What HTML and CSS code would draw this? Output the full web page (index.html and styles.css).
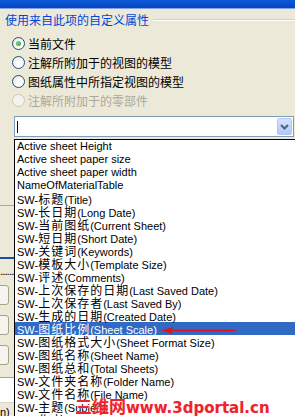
FILE: index.html
```html
<!DOCTYPE html>
<html lang="zh">
<head>
  <meta charset="UTF-8">
  <meta name="viewport" content="width=device-width, initial-scale=1.0">
  <title>自定义属性</title>
  <link rel="stylesheet" href="styles.css">
</head>
<body>
  <!-- window title bar (only its bottom edge is visible) -->
  <div class="titlebar"></div>

  <div class="dialog">
    <!-- group box header -->
    <div class="group-head">
      <span class="group-title">使用来自此项的自定义属性</span>
      <span class="groove"></span>
    </div>

    <div class="options">
      <label class="option"><span class="radio checked"></span>当前文件</label>
      <label class="option"><span class="radio"></span>注解所附加于的视图的模型</label>
      <label class="option"><span class="radio"></span>图纸属性中所指定视图的模型</label>
      <label class="option disabled"><span class="radio"></span>注解所附加于的零部件</label>
    </div>

    <div class="combo">
      <span class="caret"></span>
      <span class="drop-btn">
        <svg width="9" height="6" viewBox="0 0 9 6"><path d="M1 1 L4.5 4.5 L8 1" fill="none" stroke="#4d6185" stroke-width="2"/></svg>
      </span>
    </div>

    <!-- parts of the dialog that sit under the open list -->
    <div class="behind">
      <div class="sep"></div>
      <div class="blue-line"></div>
      <div class="dots">........</div>
      <div class="btn-edge"></div>
      <div class="btn-edge"></div>
      <div class="btn-edge"></div>
      <div class="white-box"></div>
      <div class="tail">n)</div>
    </div>

    <!-- open drop-down list -->
    <ul class="droplist">
      <li>Active sheet Height</li>
      <li>Active sheet paper size</li>
      <li>Active sheet paper width</li>
      <li>NameOfMaterialTable</li>
      <li>SW-<span class="zh">标题</span>(Title)</li>
      <li>SW-<span class="zh">长日期</span>(Long Date)</li>
      <li>SW-<span class="zh">当前图纸</span>(Current Sheet)</li>
      <li>SW-<span class="zh">短日期</span>(Short Date)</li>
      <li>SW-<span class="zh">关键词</span>(Keywords)</li>
      <li>SW-<span class="zh">模板大小</span>(Template Size)</li>
      <li>SW-<span class="zh">评述</span>(Comments)</li>
      <li>SW-<span class="zh">上次保存的日期</span>(Last Saved Date)</li>
      <li>SW-<span class="zh">上次保存者</span>(Last Saved By)</li>
      <li>SW-<span class="zh">生成的日期</span>(Created Date)</li>
      <li class="selected">SW-<span class="zh">图纸比例</span>(Sheet Scale)</li>
      <li>SW-<span class="zh">图纸格式大小</span>(Sheet Format Size)</li>
      <li>SW-<span class="zh">图纸名称</span>(Sheet Name)</li>
      <li>SW-<span class="zh">图纸总和</span>(Total Sheets)</li>
      <li>SW-<span class="zh">文件夹名称</span>(Folder Name)</li>
      <li>SW-<span class="zh">文件名称</span>(File Name)</li>
      <li>SW-<span class="zh">主题</span>(Subject)</li>
      <li>SW-<span class="zh">作者</span>(Author)</li>
    </ul>

    <!-- red pointer drawn over the screenshot -->
    <svg class="pointer" width="80" height="10" viewBox="0 0 80 10">
      <line x1="10" y1="5.5" x2="76" y2="5.5" stroke="#e2101c" stroke-width="1.3"/>
      <path d="M1 5.5 L13 2 L11 5.5 L13 9 Z" fill="#e2101c"/>
    </svg>

    <div class="watermark"><span class="wm-zh">三维网</span>www.3dportal.cn</div>
  </div>
</body>
</html>
```

FILE: styles.css
```css
body {
  margin: 0;
  width: 295px;
  height: 416px;
  overflow: hidden;
  background-color: #ece9d8;
  font-family: "Liberation Sans", "Noto Sans CJK SC", sans-serif;
  font-size: 12px;
  color: #000;
}

.titlebar {
  height: 8px;
  background: linear-gradient(#0a5ad8, #0844c0);
  border-bottom: 1px solid #7fa4e4;
}

.dialog {
  position: relative;
  height: 407px;
}

.group-head {
  display: flex;
  align-items: center;
  height: 16px;
  margin-top: 3px;
  padding-left: 5px;
}

.group-title {
  color: #0046d5;
  font-family: "Noto Sans CJK SC", sans-serif;
  font-size: 12px;
  line-height: 16px;
}

.groove {
  flex: 1;
  margin-left: 4px;
  border-top: 1px solid #d0d0bf;
  border-bottom: 1px solid #fff;
}

.options {
  padding-top: 6px;
}

.option {
  display: flex;
  align-items: center;
  height: 19px;
  padding-left: 12px;
  font-family: "Noto Sans CJK SC", sans-serif;
  font-size: 12px;
}

.radio {
  width: 11px;
  height: 11px;
  margin-right: 3px;
  border: 1px solid #1c5180;
  border-radius: 50%;
  background: radial-gradient(circle at 65% 65%, #fff 30%, #dcdcd7 100%);
  display: flex;
  align-items: center;
  justify-content: center;
}

.radio.checked::after {
  content: "";
  width: 5px;
  height: 5px;
  border-radius: 50%;
  background: radial-gradient(circle at 35% 35%, #7ad67a, #21a121);
}

.option.disabled {
  color: #aca899;
}

.option.disabled .radio {
  border-color: #cac8bb;
  background: #f4f3ee;
}

.combo {
  display: flex;
  align-items: center;
  justify-content: space-between;
  height: 19px;
  margin: 6px 1px 0 14px;
  padding: 0 1px 0 2px;
  background: #fff;
  border: 1px solid #7f9db9;
}

.caret {
  width: 1px;
  height: 12px;
  background: #000;
}

.drop-btn {
  width: 15px;
  height: 17px;
  box-sizing: border-box;
  display: flex;
  align-items: center;
  justify-content: center;
  background: linear-gradient(#d6e3fe, #b4c8f5);
  border: 1px solid #b2c4ef;
  border-radius: 2px;
}

.behind {
  display: flex;
  flex-direction: column;
  padding-top: 68px;
}

.sep {
  height: 1px;
  background: #aca899;
}

.blue-line {
  height: 2px;
  margin-top: 51px;
  background: #1f4c9c;
}

.dots {
  height: 10px;
  margin-top: 8px;
  line-height: 10px;
  font-size: 10px;
  letter-spacing: -1px;
}

.btn-edge {
  width: 40px;
  height: 20px;
  margin: 8px 0 2px -31px;
  box-sizing: border-box;
  border: 1px solid #a5a38f;
  border-radius: 3px;
  background: #f5f4ee;
}

.white-box {
  height: 24px;
  margin-top: 10px;
  background: #fff;
  border-top: 1px solid #a5a38f;
  border-bottom: 1px solid #d8d6c8;
}

.tail {
  margin-top: 3px;
  font-size: 11px;
  line-height: 12px;
}

.droplist {
  position: absolute;
  top: 127px;
  left: 14px;
  width: 290px;
  margin: 0;
  padding: 0;
  list-style: none;
  background: #fff;
  border: 1px solid #000;
  font-size: 11px;
}

.droplist li {
  height: 13px;
  line-height: 13px;
  padding-left: 2px;
  white-space: nowrap;
}

.droplist .zh {
  font-family: "Noto Sans CJK SC", sans-serif;
  font-size: 12px;
  letter-spacing: 1px;
}

.droplist .selected {
  background: #316ac5;
  color: #fff;
}

.pointer {
  position: absolute;
  top: 313px;
  left: 160px;
}

.watermark {
  position: absolute;
  top: 386px;
  left: 75px;
  color: #f0222c;
  font-family: "DejaVu Sans", sans-serif;
  font-weight: bold;
  font-size: 15px;
  line-height: 16px;
  white-space: nowrap;
  text-shadow: 0 0 1px #ffd6d6;
}

.wm-zh {
  font-family: "Noto Sans CJK SC", sans-serif;
  font-size: 17px;
}
```
